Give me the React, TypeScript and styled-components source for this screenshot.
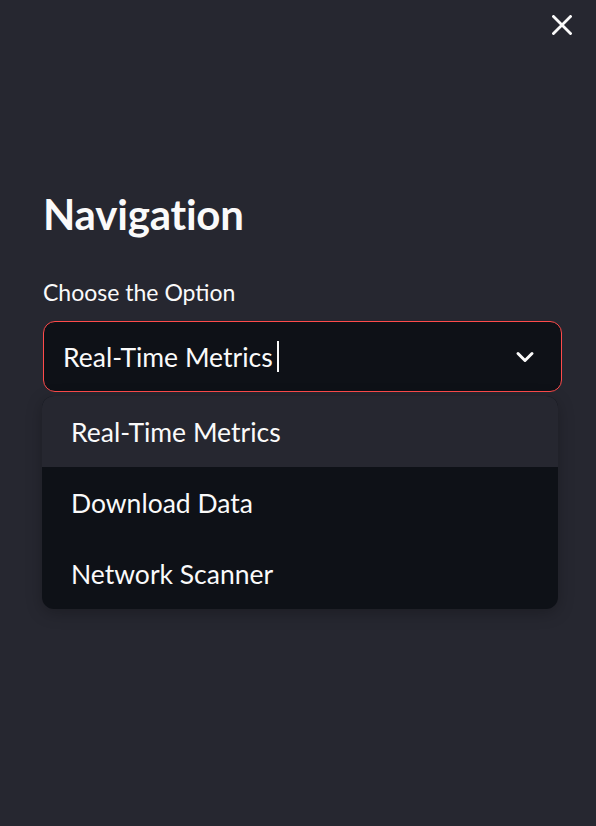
import React from 'react'
import styled, { createGlobalStyle } from 'styled-components'

const GlobalStyle = createGlobalStyle`
  html, body {
    margin: 0;
    padding: 0;
    background: #262730;
  }
  body {
    font-family: "Source Sans Pro", Lato, "Noto Sans", sans-serif;
    color: #fafafa;
  }
`

const Sidebar = styled.aside`
  min-height: 100vh;
  box-sizing: border-box;
  background: #262730;
  padding: 0 34px 0 43px;
`

const TopBar = styled.div`
  height: 50px;
  display: flex;
  align-items: center;
  justify-content: flex-end;
  margin-right: -15px;
`

const CloseButton = styled.button`
  width: 30px;
  height: 30px;
  padding: 0;
  border: none;
  background: transparent;
  color: #fafafa;
  display: flex;
  align-items: center;
  justify-content: center;
  cursor: pointer;
`

const Heading = styled.h2`
  margin: 138px 0 0;
  font-size: 42px;
  line-height: 52px;
  font-weight: 700;
  letter-spacing: -0.2px;
`

const Label = styled.label`
  display: block;
  margin-top: 38px;
  font-size: 23px;
  line-height: 28px;
  font-weight: 400;
`

const SelectWrap = styled.div`
  position: relative;
  margin-top: 15px;
`

const SelectBox = styled.div`
  height: 71px;
  box-sizing: border-box;
  display: flex;
  align-items: center;
  padding: 0 26px 0 19px;
  border: 1px solid #ff4b4b;
  border-radius: 12px;
  background: #0e1117;
`

const Value = styled.span`
  font-size: 26.5px;
  line-height: 32px;
  display: flex;
  align-items: center;
`

const Caret = styled.span`
  width: 2px;
  height: 31px;
  margin-left: 4px;
  background: #fafafa;
`

const Chevron = styled.span`
  margin-left: auto;
  display: flex;
  align-items: center;
`

const Menu = styled.ul`
  position: absolute;
  top: 75px;
  left: -1px;
  right: 4px;
  margin: 0;
  padding: 0;
  list-style: none;
  background: #0e1117;
  border-radius: 12px;
  overflow: hidden;
  box-shadow: 0 4px 16px rgba(0, 0, 0, 0.25);
`

const Option = styled.li<{ $active?: boolean }>`
  height: 71px;
  display: flex;
  align-items: center;
  padding-left: 29px;
  font-size: 26.5px;
  background: ${p => (p.$active ? '#262730' : 'transparent')};
`

const options = ['Real-Time Metrics', 'Download Data', 'Network Scanner']

const App = () => {
  const [value] = React.useState(options[0])

  return (
    <>
      <GlobalStyle />
      <Sidebar>
        <TopBar>
          <CloseButton aria-label="Close sidebar">
            <svg width="20" height="20" viewBox="0 0 20 20" fill="none">
              <path d="M1.5 1.5L18.5 18.5M18.5 1.5L1.5 18.5" stroke="currentColor" strokeWidth="2.8" strokeLinecap="square" />
            </svg>
          </CloseButton>
        </TopBar>

        <Heading>Navigation</Heading>
        <Label>Choose the Option</Label>

        <SelectWrap>
          <SelectBox>
            <Value>
              {value}
              <Caret />
            </Value>
            <Chevron>
              <svg width="20" height="14" viewBox="0 0 20 14" fill="none">
                <path d="M3 3.5L10 10.5L17 3.5" stroke="#fafafa" strokeWidth="3" strokeLinecap="round" strokeLinejoin="round" />
              </svg>
            </Chevron>
          </SelectBox>

          <Menu>
            {options.map(o => (
              <Option key={o} $active={o === value}>{o}</Option>
            ))}
          </Menu>
        </SelectWrap>
      </Sidebar>
    </>
  )
}

export default App
